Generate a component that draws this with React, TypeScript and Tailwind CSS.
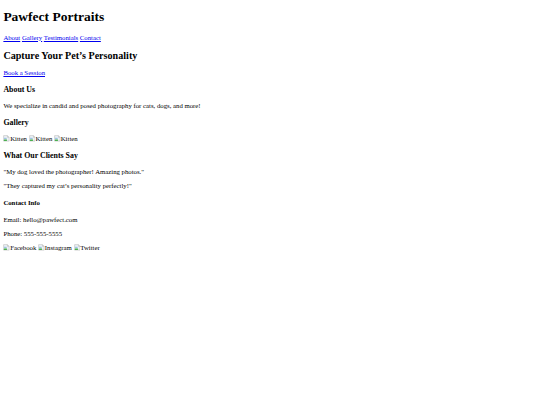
import React from "react";

const serif = "font-['Liberation_Serif','Times_New_Roman',serif]";

function Broken({ alt }: { alt: string }) {
  return (
    <span className="inline-block">
      <svg
        viewBox="0 0 16 16"
        className="inline-block h-[6.75px] w-[6.75px] align-[-0.5px]"
      >
        <path d="M1.5 1.5h9l4 4v9h-13z" fill="#eef3f7" stroke="#a0a0a0" />
        <path d="M2.5 6.5h6v3h-6z" fill="#9ec3e6" />
        <path d="M2 14h8l-2.5-5-2 2.5-1.5-1.5L2 12z" fill="#4caf50" />
        <path d="M10.5 1.5v4h4" fill="none" stroke="#a0a0a0" />
      </svg>
      {alt}
    </span>
  );
}

export default function App() {
  return (
    <div className={`${serif} mt-[3.375px] px-[3.375px] text-[6.75px] leading-[7.594px] text-black bg-white`}>
      <h1 className="my-[9.045px] text-[13.5px] font-bold leading-[15.61px]">Pawfect Portraits</h1>
      <nav>
        <a href="#about" className="text-[#0000EE] underline">About</a>{" "}
        <a href="#gallery" className="text-[#0000EE] underline">Gallery</a>{" "}
        <a href="#testimonials" className="text-[#0000EE] underline">Testimonials</a>{" "}
        <a href="#contact" className="text-[#0000EE] underline">Contact</a>
      </nav>
      <section>
        <h2 className="my-[8.404px] text-[10.125px] font-bold leading-[11.39px]">Capture Your Pet’s Personality</h2>
        <a href="#book" className="block my-[6.75px] text-[#0000EE] underline w-fit">Book a Session</a>
      </section>
      <section>
        <h3 className="my-[7.898px] text-[7.898px] font-bold leading-[9.28px]">About Us</h3>
        <p className="my-[6.75px]">We specialize in candid and posed photography for cats, dogs, and more!</p>
      </section>
      <section>
        <h3 className="my-[7.898px] text-[7.898px] font-bold leading-[9.28px]">Gallery</h3>
        <div className="leading-[8px]">
          <Broken alt="Kitten" /> <Broken alt="Kitten" /> <Broken alt="Kitten" />
        </div>
      </section>
      <section>
        <h3 className="my-[7.898px] text-[7.898px] font-bold leading-[9.28px]">What Our Clients Say</h3>
        <p className="my-[6.75px]">"My dog loved the photographer! Amazing photos."</p>
        <p className="my-[6.75px]">"They captured my cat’s personality perfectly!"</p>
      </section>
      <footer>
        <h4 className="my-[8.978px] text-[6.75px] font-bold leading-[7.594px]">Contact Info</h4>
        <p className="my-[6.75px]">Email: hello@pawfect.com</p>
        <p className="my-[6.75px]">Phone: 555-555-5555</p>
        <div className="leading-[8px]">
          <Broken alt="Facebook" /> <Broken alt="Instagram" /> <Broken alt="Twitter" />
        </div>
      </footer>
    </div>
  );
}
